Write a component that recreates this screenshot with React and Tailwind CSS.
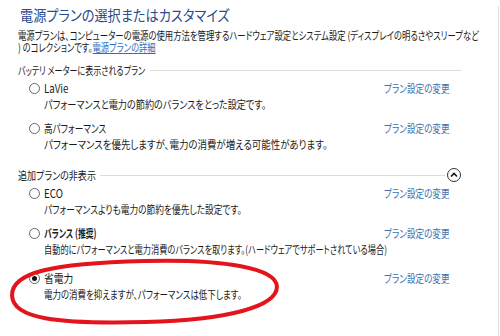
import React from "react";

const font = "font-['Noto_Sans_CJK_JP',_'Noto_Sans',_sans-serif] [font-feature-settings:'palt']";

function Radio({ checked }) {
  return (
    <span className="relative inline-flex h-[11px] w-[11px] shrink-0 items-center justify-center rounded-full border border-[#666] bg-white">
      {checked && <span className="h-[5px] w-[5px] rounded-full bg-[#111]" />}
    </span>
  );
}

function Header({ label, chevron, sx }) {
  return (
    <div className="flex h-[16px] items-center pr-[37px]">
      <span className={`block origin-left whitespace-nowrap text-[11px] leading-[16px] text-[#1a1a1a] ${sx}`}>{label}</span>
      <span className={`h-px flex-1 bg-[#dcdcdc] ${chevron ? "ml-[-13px]" : "ml-[-42px]"}`} />
      {chevron && (
        <span className="ml-[2px] flex h-[14px] w-[14px] items-center justify-center rounded-full border border-[#333] bg-white">
          <svg width="8" height="6" viewBox="0 0 8 6">
            <path d="M1 4.5 L4 1.5 L7 4.5" fill="none" stroke="#111" strokeWidth="1.6" />
          </svg>
        </span>
      )}
    </div>
  );
}

function Plan({ name, desc, checked, bold, mt, nx, dx }) {
  return (
    <div className={mt}>
      <div className="flex h-[16px] items-center">
        <div className="flex w-[366px] items-center pl-[11px]">
          <Radio checked={checked} />
          <span className={`ml-[4px] block origin-left whitespace-nowrap text-[11.5px] leading-[16px] text-[#1a1a1a] ${bold ? "font-bold" : ""} ${nx}`}>{name}</span>
        </div>
        <span className="block origin-left scale-x-[0.78] whitespace-nowrap text-[11px] leading-[16px] text-[#3f6fae]">プラン設定の変更</span>
      </div>
      <div className="flex h-[16px] items-center pl-[26px]">
        <span className={`block origin-left whitespace-nowrap text-[11px] leading-[16px] text-[#1a1a1a] ${dx}`}>{desc}</span>
      </div>
    </div>
  );
}

export default function App() {
  return (
    <div className={`relative h-[336px] w-[500px] overflow-hidden bg-white ${font}`}>
      <div className="h-full w-[499px] border-b border-r border-[#e3e3e3] pl-[18px]">
        <div className="mt-[6px] flex h-[18px] items-center pl-[2px]">
          <span className="block origin-left scale-x-[0.88] whitespace-nowrap text-[15px] leading-[18px] text-[#2a4b8d]">電源プランの選択またはカスタマイズ</span>
        </div>
        <div className="mt-[5px] text-[11px] leading-[12px] text-[#1a1a1a] whitespace-nowrap">
          <div className="origin-left scale-x-[0.76]">電源プランは、コンピューターの電源の使用方法を管理するハードウェア設定とシステム設定 (ディスプレイの明るさやスリープなど</div>
          <div className="origin-left scale-x-[0.75]">) のコレクションです。<span className="text-[#2f6fc0] underline">電源プランの詳細</span></div>
        </div>
        <div className="mt-[9px]">
          <Header label="バッテリ メーターに表示されるプラン" sx="scale-x-[0.73]" />
        </div>
        <Plan mt="mt-[2px]" name="LaVie" nx="scale-x-[0.85]" dx="scale-x-[0.83]" desc="パフォーマンスと電力の節約のバランスをとった設定です。" />
        <Plan mt="mt-[8px]" name="高パフォーマンス" nx="scale-x-[0.75]" dx="scale-x-[0.86]" desc="パフォーマンスを優先しますが、電力の消費が増える可能性があります。" />
        <div className="mt-[15px]">
          <Header label="追加プランの非表示" chevron sx="scale-x-[0.82]" />
        </div>
        <Plan mt="mt-[2px]" name="ECO" nx="scale-x-[0.85]" dx="scale-x-[0.79]" desc="パフォーマンスよりも電力の節約を優先した設定です。" />
        <Plan mt="mt-[8px]" name="バランス (推奨)" bold nx="scale-x-[0.68]" dx="scale-x-[0.745]" desc="自動的にパフォーマンスと電力消費のバランスを取ります。(ハードウェアでサポートされている場合)" />
        <Plan mt="mt-[13px]" name="省電力" checked nx="scale-x-[0.85]" dx="scale-x-[0.77]" desc="電力の消費を抑えますが、パフォーマンスは低下します。" />
      </div>
      <svg className="pointer-events-none absolute left-0 top-0" width="500" height="336" viewBox="0 0 500 336">
        <path
          d="M277 290 C277 272 226.8 261 145 261 C52 261 12 269 12 292 C12 315 55 322 145 322 C226.8 322 277 310 277 290 Z"
          fill="none"
          stroke="#e3141c"
          strokeWidth="4"
          transform="rotate(-1.5 145 292)"
        />
      </svg>
    </div>
  );
}
